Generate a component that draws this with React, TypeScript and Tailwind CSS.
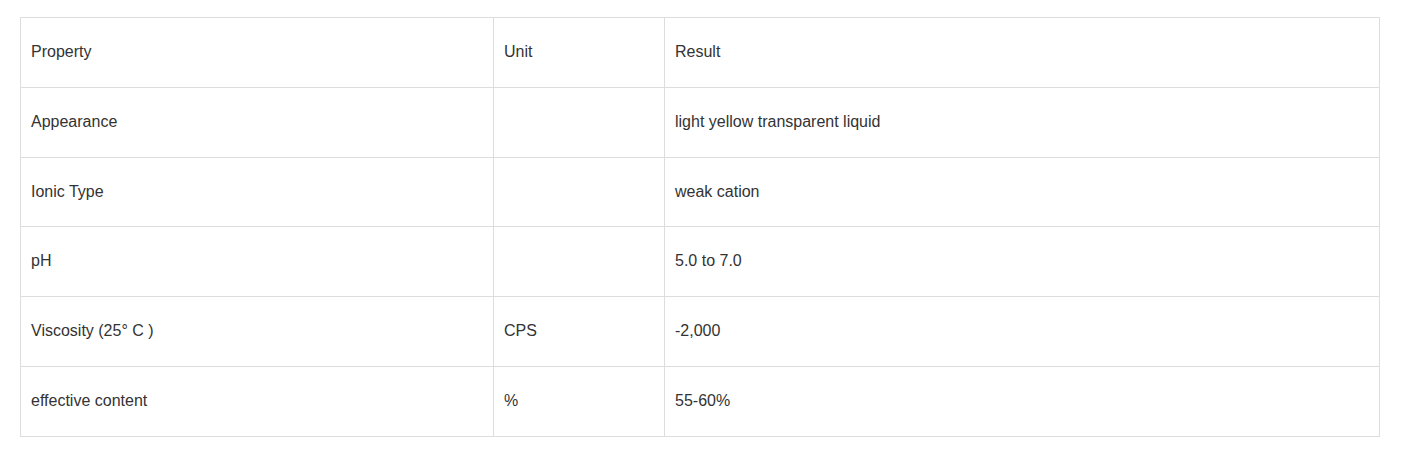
const rows: [string, string, string][] = [
  ['Property', 'Unit', 'Result'],
  ['Appearance', '', 'light yellow transparent liquid'],
  ['Ionic Type', '', 'weak cation'],
  ['pH', '', '5.0 to 7.0'],
  ['Viscosity (25° C )', 'CPS', '-2,000'],
  ['effective content', '%', '55-60%'],
]

export default function App() {
  return (
    <div className="bg-white min-h-[452px] pl-[20px] pt-[17px] font-['Liberation_Sans',Arial,sans-serif] text-[16px] text-[#333]">
      <table className="w-[1359px] border-collapse table-fixed">
        <colgroup>
          <col className="w-[473px]" />
          <col className="w-[171px]" />
          <col className="w-[715px]" />
        </colgroup>
        <tbody>
          {rows.map((r, i) => (
            <tr key={i} className="h-[69.83px]">
              {r.map((c, j) => (
                <td key={j} className="border border-[#ddd] px-[10px] pt-0 pb-[1px] align-middle leading-[20px]">
                  {c}
                </td>
              ))}
            </tr>
          ))}
        </tbody>
      </table>
    </div>
  )
}
